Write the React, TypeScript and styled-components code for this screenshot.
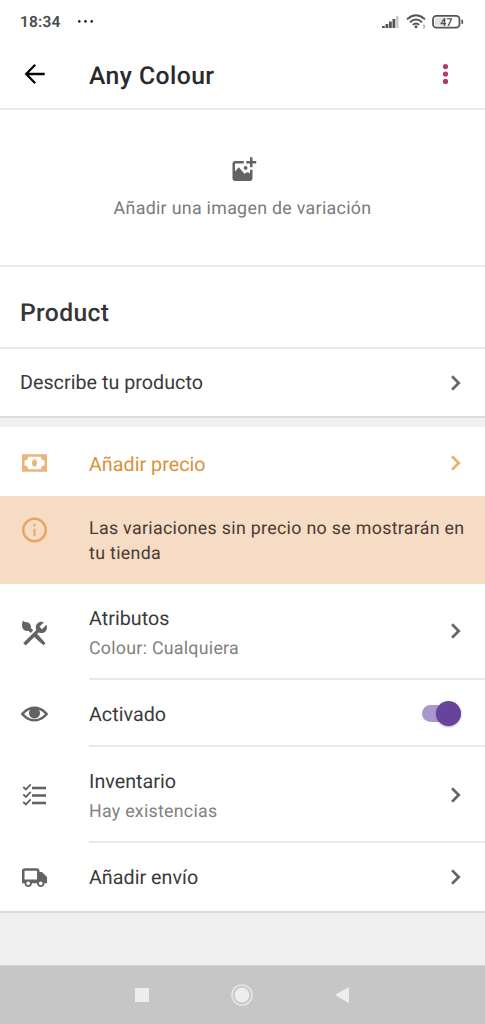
import React from 'react';
import styled, { createGlobalStyle } from 'styled-components';

const GlobalStyle = createGlobalStyle`
  * { box-sizing: border-box; }
  body { margin: 0; background: #f0f0f0; font-family: Roboto, "Noto Sans", sans-serif; color: #3a3a3c; text-rendering: geometricPrecision; }
`;

const Screen = styled.div`
  width: 485px;
  height: 1024px;
  display: flex;
  flex-direction: column;
  overflow: hidden;
  background: #f0f0f0;
`;

const StatusBar = styled.div`
  height: 42px;
  flex: none;
  display: flex;
  align-items: center;
  padding: 1px 21px 0 20px;
  background: #fff;
`;

const Clock = styled.span`
  width: 57px;
  font-size: 15.5px;
  font-weight: 600;
  letter-spacing: 0.15px;
  color: #4c4c4c;
`;

const Spacer = styled.span`
  flex: 1;
`;

const AppBar = styled.header`
  height: 66px;
  flex: none;
  display: flex;
  align-items: center;
  padding: 0 25px 2px 20px;
  background: #fff;
`;

const AppTitle = styled.h1`
  flex: 1;
  margin: 4px 0 0 39px;
  font-size: 24.7px;
  font-weight: 500;
  letter-spacing: 0.45px;
  color: #2a2a2c;
`;

const ImagePicker = styled.section`
  height: 159px;
  flex: none;
  display: flex;
  flex-direction: column;
  align-items: center;
  padding-top: 46px;
  background: #fff;
  border-top: 2px solid #e9e9e9;
  border-bottom: 2px solid #e9e9e9;
`;

const PickerLabel = styled.span`
  margin-top: 11px;
  line-height: 24px;
  font-size: 17.8px;
  letter-spacing: 0.31px;
  color: #7b7b7b;
`;

const SectionHeading = styled.div`
  height: 82px;
  flex: none;
  display: flex;
  align-items: center;
  padding: 12px 20px 0;
  background: #fff;
  border-bottom: 2px solid #e9e9e9;
  font-size: 24.7px;
  font-weight: 500;
  letter-spacing: 0.35px;
  color: #363638;
`;

const Card = styled.section`
  flex: none;
  background: #fff;
  border-bottom: 2px solid #dcdcdc;
`;

const Row = styled.div<{ $height: number }>`
  height: ${(p) => p.$height}px;
  display: flex;
  align-items: center;
  padding-left: 20px;
`;

const IconSlot = styled.span<{ $drop?: number }>`
  width: 69px;
  flex: none;
  display: flex;
  padding-top: ${(p) => p.$drop ?? 0}px;
`;

const RowBody = styled.div<{ $divided?: boolean; $drop?: number }>`
  flex: 1;
  height: 100%;
  display: flex;
  align-items: center;
  padding-right: 14px;
  padding-top: ${(p) => p.$drop ?? 0}px;
  border-bottom: ${(p) => (p.$divided ? '2px solid #e9e9e9' : 'none')};
`;

const RowText = styled.div<{ $drop?: number }>`
  flex: 1;
  display: flex;
  flex-direction: column;
  gap: 5px;
  padding-top: ${(p) => p.$drop ?? 0}px;
`;

const RowTitle = styled.span<{ $color?: string }>`
  line-height: 25px;
  font-size: 19.7px;
  letter-spacing: 0.03px;
  color: ${(p) => p.$color ?? '#3a3a3c'};
`;

const RowDetail = styled.span`
  line-height: 25px;
  font-size: 17.8px;
  letter-spacing: 0.27px;
  color: #818181;
`;

const Notice = styled.div`
  height: 88px;
  display: flex;
  padding: 19px 12px 0 20px;
  background: #f6dcc5;
`;

const NoticeText = styled.p`
  margin: 1px 0 0;
  flex: 1;
  font-size: 17.8px;
  line-height: 25px;
  letter-spacing: 0.32px;
  color: #4a3b33;
`;

const Gap = styled.div`
  height: 9px;
  flex: none;
`;

const Switch = styled.span`
  width: 39px;
  height: 17px;
  margin: 2px 10px 0 0;
  display: flex;
  align-items: center;
  justify-content: flex-end;
  border-radius: 9px;
  background: #ab97cf;
`;

const Knob = styled.span`
  width: 25px;
  height: 25px;
  flex: none;
  border-radius: 50%;
  background: #674399;
  box-shadow: 0 1px 2px rgba(80, 50, 130, 0.45);
`;

const NavBar = styled.nav`
  height: 59px;
  flex: none;
  margin-top: auto;
  display: flex;
  align-items: center;
  justify-content: space-between;
  padding: 0 136px 0 135px;
  background: #c6c6c6;
  border-top: 1px solid #d4d4d4;
`;

const Icon = ({ d, color = '#636365', weight = 0 }: { d: string; color?: string; weight?: number }) => (
  <svg width="30" height="30" viewBox="0.4 0 24 24" fill={color} stroke={color} strokeWidth={weight} fillRule="evenodd">
    <path d={d} />
  </svg>
);

const paths = {
  addImage:
    'M23 4v2h-3v3h-2V6h-3V4h3V1h2v3h3zm-8.5 7c.828 0 1.5-.672 1.5-1.5S15.328 8 14.5 8 13 8.672 13 9.5s.672 1.5 1.5 1.5zm3.5 3.234l-.513-.57c-.794-.885-2.18-.885-2.976 0l-.655.73L9 9l-3 3.333V6h7V4H6c-1.105 0-2 .895-2 2v12c0 1.105.895 2 2 2h12c1.105 0 2-.895 2-2v-7h-2v3.234z',
  chevron: 'M10 6L8.59 7.41 13.17 12l-4.58 4.59L10 18l6-6z',
  money:
    'M2 5v14h20V5H2zm5 12c0-1.657-1.343-3-3-3v-4c1.657 0 3-1.343 3-3h10c0 1.657 1.343 3 3 3v4c-1.657 0-3 1.343-3 3H7zm5-8c1.1 0 2 1.3 2 3s-.9 3-2 3-2-1.3-2-3 .9-3 2-3z',
  info: 'M12 4c4.411 0 8 3.589 8 8s-3.589 8-8 8-8-3.589-8-8 3.589-8 8-8m0-2C6.477 2 2 6.477 2 12s4.477 10 10 10 10-4.477 10-10S17.523 2 12 2zm.8 15h-1.6v-6h1.6v6zm0-8h-1.6V7h1.6v2z',
  customize:
    'M2 6c0-1.505.3-3.08 1-4 .3.845 1.1 1.3 2.3 1.3 2.2 0 3.9 1.6 3.9 3.6 0 .386-.08.752-.212 1.09.74.594 1.276 1.09 1.99 1.71L8.9 11.98c-.62-.716-.9-1.1-1.5-1.85C7 10.2 6.387 10.3 6 10.3c-2.4 0-4-1.9-4-4.3zm12.152 6.848l1.34-1.34c.607.304 1.283.492 2.008.492 2.485 0 4.5-2.015 4.5-4.5 0-.725-.188-1.4-.493-2.007L18 9l-2-2 3.507-3.507C18.9 3.188 18.225 3 17.5 3 15.015 3 13 5.015 13 7.5c0 .725.188 1.4.493 2.007L3 20l2 2 6.848-6.848c1.885 1.928 3.874 3.753 5.977 5.45l1.425 1.148 1.5-1.5-1.15-1.425c-1.695-2.103-3.52-4.092-5.448-5.977z',
  eye: 'M12 6C5.188 6 1 12 1 12s4.188 6 11 6 11-6 11-6-4.188-6-11-6zm0 10.2c-3.943 0-6.926-2.684-8.379-4.2 1.04-1.085 2.663-2.557 4.855-3.37C7.9 9.3 7.6 10.2 7.6 11.1c0 2.43 1.97 4.4 4.4 4.4s4.4-1.97 4.4-4.4c0-.9-.3-1.8-.875-2.47 2.193.813 3.816 2.286 4.854 3.37-1.455 1.518-4.437 4.2-8.379 4.2z',
  shipping:
    'M18 8h-2V7c0-1.105-.895-2-2-2H4c-1.105 0-2 .895-2 2v10h2c0 1.657 1.343 3 3 3s3-1.343 3-3h4c0 1.657 1.343 3 3 3s3-1.343 3-3h2v-5l-4-4zM7 18.5c-.828 0-1.5-.672-1.5-1.5s.672-1.5 1.5-1.5 1.5.672 1.5 1.5-.672 1.5-1.5 1.5zM4 14V7h10v7H4zm13 4.5c-.828 0-1.5-.672-1.5-1.5s.672-1.5 1.5-1.5 1.5.672 1.5 1.5-.672 1.5-1.5 1.5z',
};

const Chevron = ({ color }: { color?: string }) => <Icon d={paths.chevron} color={color} weight={0.2} />;

const ChecklistIcon = () => (
  <svg width="30" height="30" viewBox="0 0 30 30" fill="none" stroke="#636365">
    {[7, 14.5, 22].map((y) => (
      <React.Fragment key={y}>
        <path d={`M3.3 ${y} l2.6 2.4 l4.8 -5`} strokeWidth="1.8" />
        <path d={`M12 ${y + 1} H26`} strokeWidth="2.6" />
      </React.Fragment>
    ))}
  </svg>
);

const StatusIcons = () => (
  <svg width="84" height="20" viewBox="0 0 84 20" fill="none">
    <g fill="#555">
      <rect x="2" y="14" width="2.8" height="2" />
      <rect x="5.5" y="12" width="2.8" height="4" />
      <rect x="9" y="9.5" width="2.8" height="6.5" />
      <rect x="12.5" y="7" width="2.8" height="9" />
      <rect x="16.2" y="4" width="2.2" height="12" fill="#c4c4c4" />
    </g>
    <g stroke="#555" strokeWidth="1.9">
      <path d="M27 7.2 Q36 -0.8 45 7.2" />
      <path d="M30 10.2 Q36 5 42 10.2" />
      <path d="M32.7 12.8 Q36 10 39.3 12.8" />
    </g>
    <circle cx="36" cy="14.8" r="1.5" fill="#555" />
    <path d="M43 13.3h1.3v1.4l-.6 2" stroke="#888" strokeWidth="1" />
    <rect x="53" y="3.8" width="26.5" height="11.8" rx="3.4" stroke="#555" strokeWidth="1.8" />
    <rect x="55" y="5.6" width="10" height="8.2" rx="1" fill="#e2e2e2" />
    <rect x="81.4" y="7.8" width="1.7" height="4" fill="#555" />
    <text x="66.3" y="13.5" textAnchor="middle" fontFamily="Roboto" fontSize="10.8" fontWeight="500" fill="#444">47</text>
  </svg>
);

export default function App() {
  return (
    <>
      <GlobalStyle />
      <Screen>
        <StatusBar>
          <Clock>18:34</Clock>
          <svg width="18" height="4" viewBox="0 0 18 4" fill="#222">
            <circle cx="2.3" cy="1.4" r="1.3" />
            <circle cx="8.5" cy="1.4" r="1.3" />
            <circle cx="14.7" cy="1.4" r="1.3" />
          </svg>
          <Spacer />
          <StatusIcons />
        </StatusBar>
        <AppBar>
          <svg width="30" height="30" viewBox="0 0 30 30" fill="none" stroke="#050505" strokeWidth="2.3">
            <path d="M24.7 15H6.5M15.2 5.8L6.2 15l9 9.2" />
          </svg>
          <AppTitle>Any Colour</AppTitle>
          <svg width="30" height="30" viewBox="0 0 30 30" fill="#b43a6b">
            <circle cx="15.5" cy="7.6" r="2.6" />
            <circle cx="15.5" cy="15" r="2.6" />
            <circle cx="15.5" cy="22.4" r="2.6" />
          </svg>
        </AppBar>
        <ImagePicker>
          <Icon d={paths.addImage} />
          <PickerLabel>Añadir una imagen de variación</PickerLabel>
        </ImagePicker>
        <SectionHeading>Product</SectionHeading>
        <Card>
          <Row $height={67}>
            <RowBody>
              <RowText>
                <RowTitle>Describe tu producto</RowTitle>
              </RowText>
              <Chevron />
            </RowBody>
          </Row>
        </Card>
        <Gap />
        <Card>
          <Row $height={69}>
            <IconSlot $drop={2}><Icon d={paths.money} color="#ebb47b" /></IconSlot>
            <RowBody $drop={2}>
              <RowText $drop={3}>
                <RowTitle $color="#d9923c">Añadir precio</RowTitle>
              </RowText>
              <Chevron color="#ebb064" />
            </RowBody>
          </Row>
          <Notice>
            <IconSlot><Icon d={paths.info} color="#e9a45f" /></IconSlot>
            <NoticeText>Las variaciones sin precio no se mostrarán en tu tienda</NoticeText>
          </Notice>
          <Row $height={96}>
            <IconSlot $drop={2}><Icon d={paths.customize} /></IconSlot>
            <RowBody $divided>
              <RowText $drop={4}>
                <RowTitle>Atributos</RowTitle>
                <RowDetail>Colour: Cualquiera</RowDetail>
              </RowText>
              <Chevron />
            </RowBody>
          </Row>
          <Row $height={67}>
            <IconSlot><Icon d={paths.eye} /></IconSlot>
            <RowBody $divided>
              <RowText $drop={4}>
                <RowTitle>Activado</RowTitle>
              </RowText>
              <Switch><Knob /></Switch>
            </RowBody>
          </Row>
          <Row $height={96}>
            <IconSlot><ChecklistIcon /></IconSlot>
            <RowBody $divided $drop={1}>
              <RowText $drop={3}>
                <RowTitle>Inventario</RowTitle>
                <RowDetail>Hay existencias</RowDetail>
              </RowText>
              <Chevron />
            </RowBody>
          </Row>
          <Row $height={68}>
            <IconSlot><Icon d={paths.shipping} /></IconSlot>
            <RowBody>
              <RowText $drop={1}>
                <RowTitle>Añadir envío</RowTitle>
              </RowText>
              <Chevron />
            </RowBody>
          </Row>
        </Card>
        <NavBar>
          <svg width="14" height="14" viewBox="0 0 14 14" fill="#ededed"><rect width="14" height="14" /></svg>
          <svg width="22" height="22" viewBox="0 0 22 22">
            <circle cx="11" cy="11" r="10" fill="none" stroke="#e6e6e6" strokeWidth="1.6" />
            <circle cx="11" cy="11" r="7.4" fill="#ededed" />
          </svg>
          <svg width="14" height="16" viewBox="0 0 14 16" fill="#ededed"><path d="M14 0v16L0 8z" /></svg>
        </NavBar>
      </Screen>
    </>
  );
}
